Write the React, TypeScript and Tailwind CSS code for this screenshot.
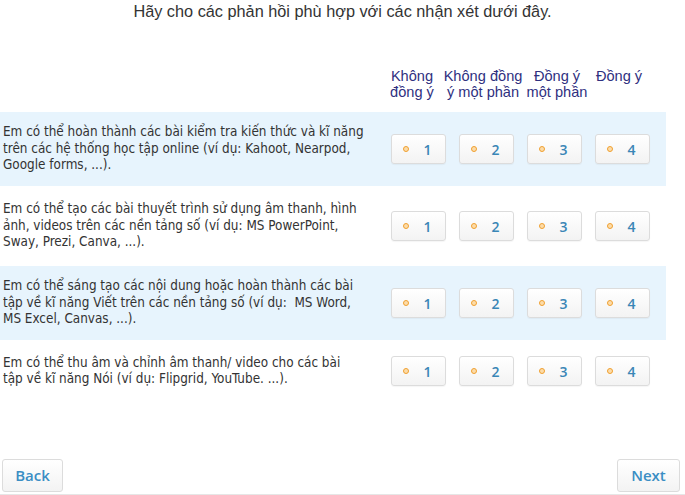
// lines are kept as in the original form so the wrapping matches
const QUESTIONS = [
  [
    "Em có thể hoàn thành các bài kiểm tra kiến thức và kĩ năng",
    "trên các hệ thống học tập online (ví dụ: Kahoot, Nearpod,",
    "Google forms, ...).",
  ],
  [
    "Em có thể tạo các bài thuyết trình sử dụng âm thanh, hình",
    "ảnh, videos trên các nền tảng số (ví dụ: MS PowerPoint,",
    "Sway, Prezi, Canva, ...).",
  ],
  [
    "Em có thể sáng tạo các nội dung hoặc hoàn thành các bài",
    "tập về kĩ năng Viết trên các nền tảng số (ví dụ: \u00a0MS Word,",
    "MS Excel, Canvas, ...).",
  ],
  [
    "Em có thể thu âm và chỉnh âm thanh/ video cho các bài",
    "tập về kĩ năng Nói (ví dụ: Flipgrid, YouTube. ...).",
  ],
];

// header lines + small offsets so each label sits where the original does
const HEADERS = [
  { a: "Không", b: "đồng ý", pad: "pr-[12px]" },
  { a: "Không đồng", b: "ý một phần", pad: "pr-[6px]" },
  { a: "Đồng ý", b: "một phần", pad: "pl-[6px]" },
  { a: "Đồng ý", b: "", pad: "pr-[6px]" },
];

function Choice({ n }: { n: number }) {
  return (
    <div className="w-[68px] flex justify-center">
      <button className="w-[55px] h-[30px] flex items-center pl-[11px] rounded-[3px] border border-[#dcdcdc] bg-gradient-to-b from-white to-[#f3f3f3] shadow-[0_1px_1px_rgba(0,0,0,0.04)]">
        <span className="w-[6px] h-[6px] rounded-full border-[1.5px] border-[#f0a030] bg-[#fcdcaa]" />
        <span className="ml-[15px] text-[14px] font-semibold text-[#3a86b6] [font-family:'Open_Sans',sans-serif]">
          {n}
        </span>
      </button>
    </div>
  );
}

export default function App() {
  return (
    <div className="relative w-[685px] h-[495px] bg-white overflow-hidden [font-family:'Liberation_Sans',Arial,sans-serif]">
      {/* Title */}
      <h1 className="pt-[1px] text-center text-[16.3px] leading-[20px] text-[#333]">
        Hãy cho các phản hồi phù hợp với các nhận xét dưới đây.
      </h1>

      {/* Column headers */}
      <div className="mt-[47px] flex">
        <div className="w-[384px]" />
        {HEADERS.map((h, i) => (
          <div
            key={i}
            className={`w-[68px] flex flex-col items-center text-[14.6px] leading-[16px] text-[#30307f] whitespace-nowrap ${h.pad}`}
          >
            <div>{h.a}</div>
            <div>{h.b}</div>
          </div>
        ))}
      </div>

      {/* Rows */}
      <div className="mt-[12px] w-[666px] flex flex-col gap-[3px]">
        {QUESTIONS.map((lines, i) => (
          <div
            key={i}
            className={`flex items-center ${i === 3 ? "h-[56px]" : "h-[74px]"} ${i % 2 === 0 ? "bg-[#e7f4fd]" : "bg-white"}`}
          >
            <p className="w-[384px] pl-[3px] text-[13.4px] leading-[16.5px] text-[#333] whitespace-nowrap [font-family:'DejaVu_Sans_Condensed','DejaVu_Sans',sans-serif]">
              {lines.map((l, j) => (
                <span key={j} className="block">
                  {l}
                </span>
              ))}
            </p>
            {[1, 2, 3, 4].map((n) => (
              <Choice key={n} n={n} />
            ))}
          </div>
        ))}
      </div>

      {/* Navigation */}
      <div className="absolute left-0 right-0 bottom-0 h-[36px] border-b border-[#e6e6e6] flex justify-between items-start px-[2px]">
        <button className="w-[61px] h-[33px] rounded-[3px] border border-[#dcdcdc] bg-gradient-to-b from-white to-[#f3f3f3] text-[15px] font-semibold text-[#3a8ec4] [font-family:'Open_Sans',sans-serif]">
          Back
        </button>
        <button className="w-[63px] h-[33px] mr-[3px] rounded-[3px] border border-[#dcdcdc] bg-gradient-to-b from-white to-[#f3f3f3] text-[15px] font-semibold text-[#3a8ec4] [font-family:'Open_Sans',sans-serif]">
          Next
        </button>
      </div>
    </div>
  );
}
